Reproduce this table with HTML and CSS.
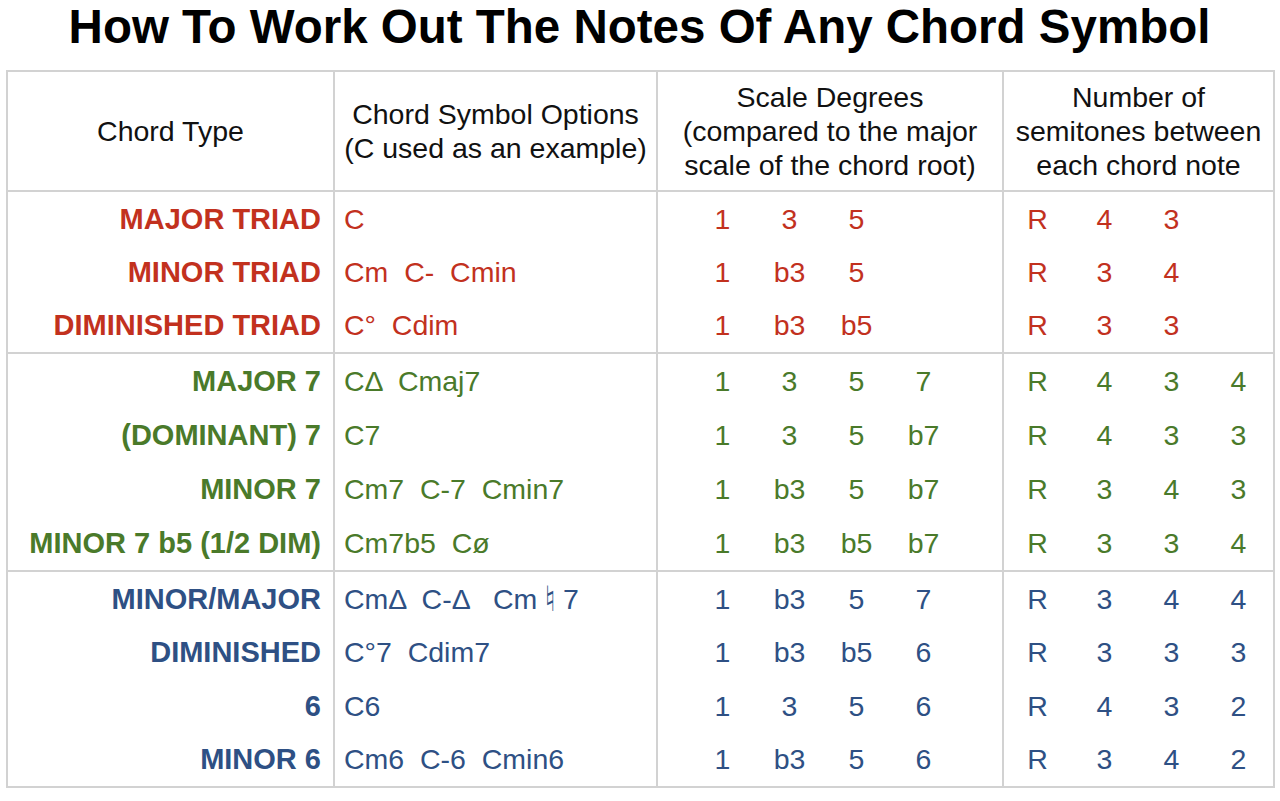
FILE: index.html
```html
<!DOCTYPE html>
<html lang="en">
<head>
<meta charset="utf-8">
<title>How To Work Out The Notes Of Any Chord Symbol</title>
<link rel="stylesheet" href="styles.css">
</head>
<body>
<h1 class="title">How To Work Out The Notes Of Any Chord Symbol</h1>
<table class="chart">
  <colgroup>
    <col class="c-type"><col class="c-sym"><col class="c-deg"><col class="c-semi">
  </colgroup>
  <thead>
    <tr>
      <th>Chord Type</th>
      <th>Chord Symbol Options<br>(C used as an example)</th>
      <th>Scale Degrees<br>(compared to the major<br>scale of the chord root)</th>
      <th>Number of<br>semitones between<br>each chord note</th>
    </tr>
  </thead>
  <tbody class="grp red">
    <tr><td class="type">MAJOR TRIAD</td><td class="sym">C</td><td class="deg"><div class="nums"><span>1</span><span>3</span><span>5</span><span></span></div></td><td class="semi"><div class="nums"><span>R</span><span>4</span><span>3</span><span></span></div></td></tr>
    <tr><td class="type">MINOR TRIAD</td><td class="sym">Cm  C-  Cmin</td><td class="deg"><div class="nums"><span>1</span><span>b3</span><span>5</span><span></span></div></td><td class="semi"><div class="nums"><span>R</span><span>3</span><span>4</span><span></span></div></td></tr>
    <tr><td class="type">DIMINISHED TRIAD</td><td class="sym">C°  Cdim</td><td class="deg"><div class="nums"><span>1</span><span>b3</span><span>b5</span><span></span></div></td><td class="semi"><div class="nums"><span>R</span><span>3</span><span>3</span><span></span></div></td></tr>
  </tbody>
  <tbody class="grp green">
    <tr><td class="type">MAJOR 7</td><td class="sym">CΔ  Cmaj7</td><td class="deg"><div class="nums"><span>1</span><span>3</span><span>5</span><span>7</span></div></td><td class="semi"><div class="nums"><span>R</span><span>4</span><span>3</span><span>4</span></div></td></tr>
    <tr><td class="type">(DOMINANT) 7</td><td class="sym">C7</td><td class="deg"><div class="nums"><span>1</span><span>3</span><span>5</span><span>b7</span></div></td><td class="semi"><div class="nums"><span>R</span><span>4</span><span>3</span><span>3</span></div></td></tr>
    <tr><td class="type">MINOR 7</td><td class="sym">Cm7  C-7  Cmin7</td><td class="deg"><div class="nums"><span>1</span><span>b3</span><span>5</span><span>b7</span></div></td><td class="semi"><div class="nums"><span>R</span><span>3</span><span>4</span><span>3</span></div></td></tr>
    <tr><td class="type">MINOR 7 b5 (1/2 DIM)</td><td class="sym">Cm7b5  Cø</td><td class="deg"><div class="nums"><span>1</span><span>b3</span><span>b5</span><span>b7</span></div></td><td class="semi"><div class="nums"><span>R</span><span>3</span><span>3</span><span>4</span></div></td></tr>
  </tbody>
  <tbody class="grp blue">
    <tr><td class="type">MINOR/MAJOR</td><td class="sym">CmΔ  C-Δ   Cm <span class="nat">♮</span> 7</td><td class="deg"><div class="nums"><span>1</span><span>b3</span><span>5</span><span>7</span></div></td><td class="semi"><div class="nums"><span>R</span><span>3</span><span>4</span><span>4</span></div></td></tr>
    <tr><td class="type">DIMINISHED</td><td class="sym">C°7  Cdim7</td><td class="deg"><div class="nums"><span>1</span><span>b3</span><span>b5</span><span>6</span></div></td><td class="semi"><div class="nums"><span>R</span><span>3</span><span>3</span><span>3</span></div></td></tr>
    <tr><td class="type">6</td><td class="sym">C6</td><td class="deg"><div class="nums"><span>1</span><span>3</span><span>5</span><span>6</span></div></td><td class="semi"><div class="nums"><span>R</span><span>4</span><span>3</span><span>2</span></div></td></tr>
    <tr><td class="type">MINOR 6</td><td class="sym">Cm6  C-6  Cmin6</td><td class="deg"><div class="nums"><span>1</span><span>b3</span><span>5</span><span>6</span></div></td><td class="semi"><div class="nums"><span>R</span><span>3</span><span>4</span><span>2</span></div></td></tr>
  </tbody>
</table>
</body>
</html>
```
FILE: styles.css
```css
html, body {
  margin: 0;
  padding: 0;
  background: #ffffff;
}
body {
  font-family: "Liberation Sans", Arial, Helvetica, sans-serif;
  color: #111111;
  padding: 0 7px 0 6px;
}
.title {
  margin: 0 0 16px 0;
  font-size: 47.5px;
  line-height: 54px;
  font-weight: 700;
  text-align: center;
  color: #000000;
}
.chart {
  border-collapse: collapse;
  table-layout: fixed;
  width: 1267px;
  font-size: 28.5px;
}
.c-type { width: 327px; }
.c-sym { width: 323px; }
.c-deg { width: 346px; }
.c-semi { width: 271px; }
.chart th, .chart td {
  border-left: 2px solid #d2d2d2;
  border-right: 2px solid #d2d2d2;
  padding: 0;
}
.chart th {
  height: 118px;
  font-weight: 400;
  line-height: 34px;
  text-align: center;
  vertical-align: middle;
  color: #111111;
  border-top: 2px solid #d2d2d2;
}
.grp {
  border-top: 2px solid #d2d2d2;
}
.grp:last-child {
  border-bottom: 2px solid #d2d2d2;
}
.chart td {
  height: 54px;
  line-height: 32px;
  vertical-align: middle;
}
.red td { height: 53.3px; }
.blue td { height: 53.5px; }
.type {
  font-weight: 700;
  font-size: 29px;
  text-align: right;
  padding-right: 12px !important;
  white-space: nowrap;
}
.sym {
  padding-left: 9px !important;
  white-space: pre;
}
.nat {
  font-family: "DejaVu Sans", "Noto Sans", sans-serif;
  font-size: 28px;
  line-height: 1;
  display: inline-block;
  transform: scale(1.1, 1.25);
}
.nums {
  display: flex;
}
.nums span {
  width: 67px;
  text-align: center;
}
.deg .nums {
  padding-left: 31px;
}
.red { color: #c2311e; }
.green { color: #4a7a2a; }
.blue { color: #2e5084; }
```
